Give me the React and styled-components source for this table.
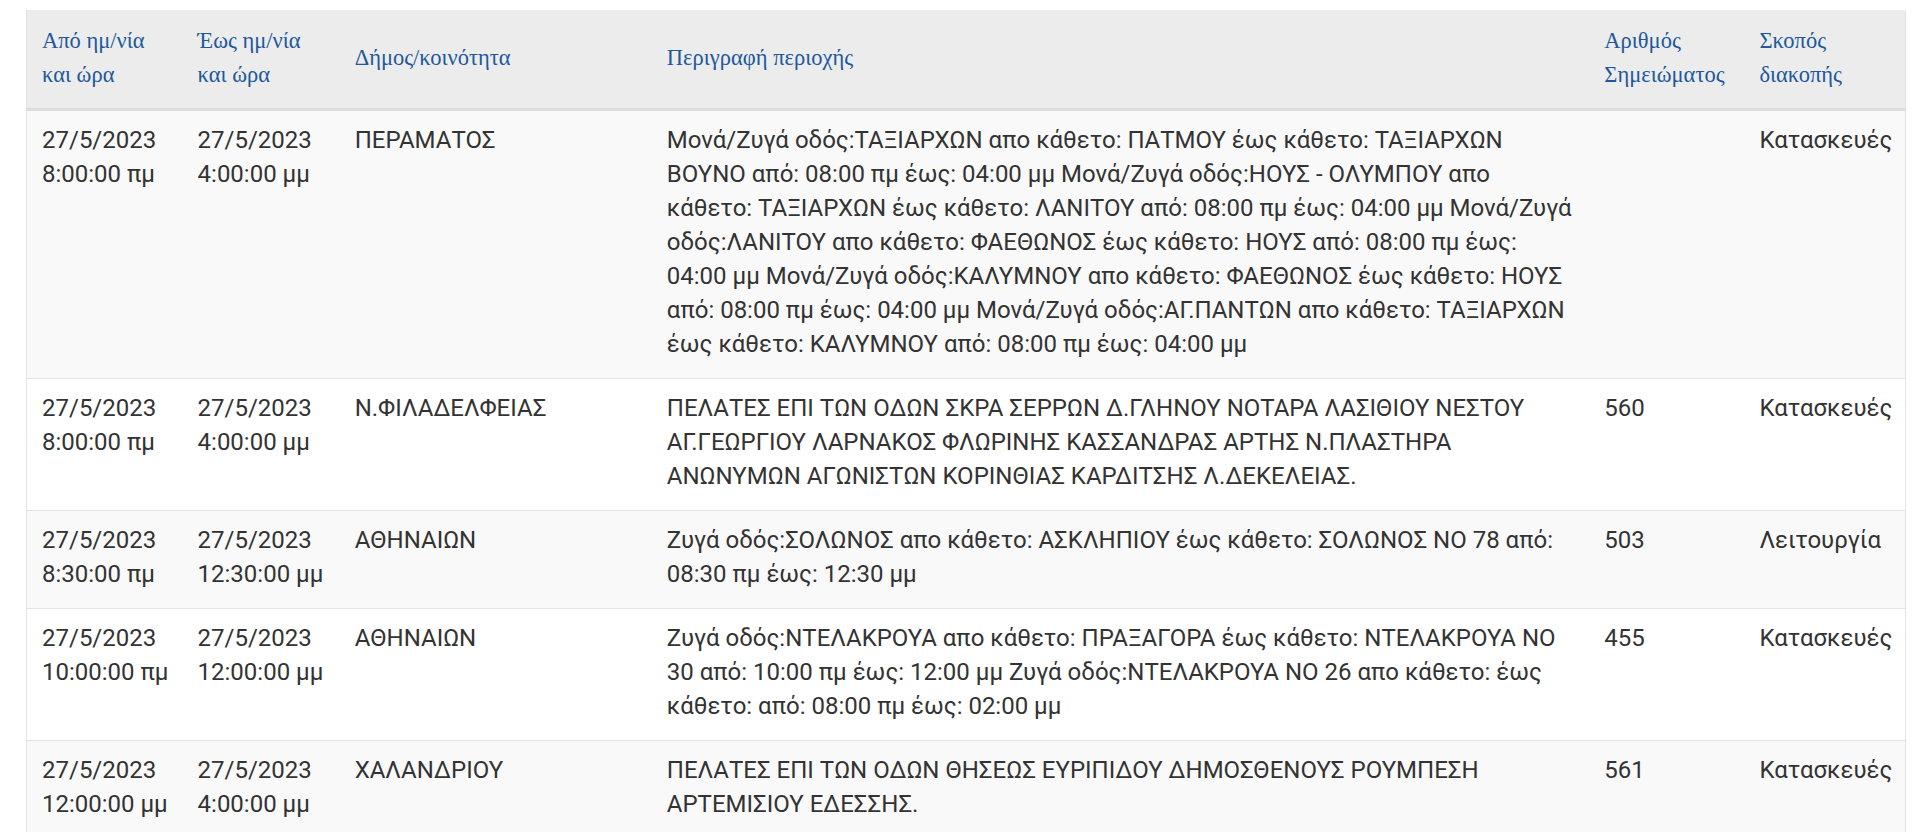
import React from 'react';
import styled, { createGlobalStyle } from 'styled-components';

const GlobalStyle = createGlobalStyle`
  html, body {
    margin: 0;
    padding: 0;
    background: #fff;
  }
`;

const Page = styled.div`
  padding: 10px 14px 0 26px;
  font-family: Roboto, "Liberation Sans", sans-serif;
`;

const Table = styled.table`
  width: 1880px;
  table-layout: fixed;
  border-collapse: collapse;
  border-left: 1px solid #e3e3e3;
  border-right: 1px solid #e3e3e3;
`;

const HeadRow = styled.tr`
  background: #ececec;
  border-bottom: 3px solid #dcdcdc;
`;

const HeadCell = styled.th`
  padding: 14px 15px 16px;
  text-align: left;
  vertical-align: middle;
  font-family: "Liberation Serif", "Times New Roman", serif;
  font-weight: normal;
  font-size: 22.5px;
  line-height: 34px;
  color: #22589a;
  white-space: nowrap;
`;

const Row = styled.tr`
  background: ${p => (p.$striped ? '#f9f9f9' : '#ffffff')};
  border-top: 1px solid #e4e4e4;
`;

const Cell = styled.td`
  padding: 12px 15px 17px;
  vertical-align: top;
  font-size: 24px;
  line-height: 34px;
  color: #333;
  white-space: ${p => (p.$nowrap ? 'nowrap' : 'normal')};
`;

const columns = [
  { title: ['Από ημ/νία', 'και ώρα'], width: 156 },
  { title: ['Έως ημ/νία', 'και ώρα'], width: 157 },
  { title: ['Δήμος/κοινότητα'], width: 312 },
  { title: ['Περιγραφή περιοχής'], width: 937 },
  { title: ['Αριθμός', 'Σημειώματος'], width: 155 },
  { title: ['Σκοπός', 'διακοπής'], width: 161 },
];

const rows = [
  {
    from: ['27/5/2023', '8:00:00 πμ'],
    to: ['27/5/2023', '4:00:00 μμ'],
    area: 'ΠΕΡΑΜΑΤΟΣ',
    desc: 'Μονά/Ζυγά οδός:ΤΑΞΙΑΡΧΩΝ απο κάθετο: ΠΑΤΜΟΥ έως κάθετο: ΤΑΞΙΑΡΧΩΝ ΒΟΥΝΟ από: 08:00 πμ έως: 04:00 μμ Μονά/Ζυγά οδός:ΗΟΥΣ - ΟΛΥΜΠΟΥ απο κάθετο: ΤΑΞΙΑΡΧΩΝ έως κάθετο: ΛΑΝΙΤΟΥ από: 08:00 πμ έως: 04:00 μμ Μονά/Ζυγά οδός:ΛΑΝΙΤΟΥ απο κάθετο: ΦΑΕΘΩΝΟΣ έως κάθετο: ΗΟΥΣ από: 08:00 πμ έως: 04:00 μμ Μονά/Ζυγά οδός:ΚΑΛΥΜΝΟΥ απο κάθετο: ΦΑΕΘΩΝΟΣ έως κάθετο: ΗΟΥΣ από: 08:00 πμ έως: 04:00 μμ Μονά/Ζυγά οδός:ΑΓ.ΠΑΝΤΩΝ απο κάθετο: ΤΑΞΙΑΡΧΩΝ έως κάθετο: ΚΑΛΥΜΝΟΥ από: 08:00 πμ έως: 04:00 μμ',
    note: '',
    reason: 'Κατασκευές',
  },
  {
    from: ['27/5/2023', '8:00:00 πμ'],
    to: ['27/5/2023', '4:00:00 μμ'],
    area: 'Ν.ΦΙΛΑΔΕΛΦΕΙΑΣ',
    desc: 'ΠΕΛΑΤΕΣ ΕΠΙ ΤΩΝ ΟΔΩΝ ΣΚΡΑ ΣΕΡΡΩΝ Δ.ΓΛΗΝΟΥ ΝΟΤΑΡΑ ΛΑΣΙΘΙΟΥ ΝΕΣΤΟΥ ΑΓ.ΓΕΩΡΓΙΟΥ ΛΑΡΝΑΚΟΣ ΦΛΩΡΙΝΗΣ ΚΑΣΣΑΝΔΡΑΣ ΑΡΤΗΣ Ν.ΠΛΑΣΤΗΡΑ ΑΝΩΝΥΜΩΝ ΑΓΩΝΙΣΤΩΝ ΚΟΡΙΝΘΙΑΣ ΚΑΡΔΙΤΣΗΣ Λ.ΔΕΚΕΛΕΙΑΣ.',
    note: '560',
    reason: 'Κατασκευές',
  },
  {
    from: ['27/5/2023', '8:30:00 πμ'],
    to: ['27/5/2023', '12:30:00 μμ'],
    area: 'ΑΘΗΝΑΙΩΝ',
    desc: 'Ζυγά οδός:ΣΟΛΩΝΟΣ απο κάθετο: ΑΣΚΛΗΠΙΟΥ έως κάθετο: ΣΟΛΩΝΟΣ ΝΟ 78 από: 08:30 πμ έως: 12:30 μμ',
    note: '503',
    reason: 'Λειτουργία',
  },
  {
    from: ['27/5/2023', '10:00:00 πμ'],
    to: ['27/5/2023', '12:00:00 μμ'],
    area: 'ΑΘΗΝΑΙΩΝ',
    desc: 'Ζυγά οδός:ΝΤΕΛΑΚΡΟΥΑ απο κάθετο: ΠΡΑΞΑΓΟΡΑ έως κάθετο: ΝΤΕΛΑΚΡΟΥΑ ΝΟ 30 από: 10:00 πμ έως: 12:00 μμ Ζυγά οδός:ΝΤΕΛΑΚΡΟΥΑ ΝΟ 26 απο κάθετο: έως κάθετο: από: 08:00 πμ έως: 02:00 μμ',
    note: '455',
    reason: 'Κατασκευές',
  },
  {
    from: ['27/5/2023', '12:00:00 μμ'],
    to: ['27/5/2023', '4:00:00 μμ'],
    area: 'ΧΑΛΑΝΔΡΙΟΥ',
    desc: 'ΠΕΛΑΤΕΣ ΕΠΙ ΤΩΝ ΟΔΩΝ ΘΗΣΕΩΣ ΕΥΡΙΠΙΔΟΥ ΔΗΜΟΣΘΕΝΟΥΣ ΡΟΥΜΠΕΣΗ ΑΡΤΕΜΙΣΙΟΥ ΕΔΕΣΣΗΣ.',
    note: '561',
    reason: 'Κατασκευές',
  },
];

const Lines = ({ lines }) =>
  lines.map((l, i) => (
    <React.Fragment key={i}>
      {i > 0 && <br />}
      {l}
    </React.Fragment>
  ));

export default function App() {
  return (
    <Page>
      <GlobalStyle />
      <Table>
        <colgroup>
          {columns.map((c, i) => (
            <col key={i} style={{ width: c.width }} />
          ))}
        </colgroup>
        <thead>
          <HeadRow>
            {columns.map((c, i) => (
              <HeadCell key={i}>
                <Lines lines={c.title} />
              </HeadCell>
            ))}
          </HeadRow>
        </thead>
        <tbody>
          {rows.map((r, i) => (
            <Row key={i} $striped={i % 2 === 0}>
              <Cell $nowrap><Lines lines={r.from} /></Cell>
              <Cell $nowrap><Lines lines={r.to} /></Cell>
              <Cell>{r.area}</Cell>
              <Cell>{r.desc}</Cell>
              <Cell>{r.note}</Cell>
              <Cell>{r.reason}</Cell>
            </Row>
          ))}
        </tbody>
      </Table>
    </Page>
  );
}
